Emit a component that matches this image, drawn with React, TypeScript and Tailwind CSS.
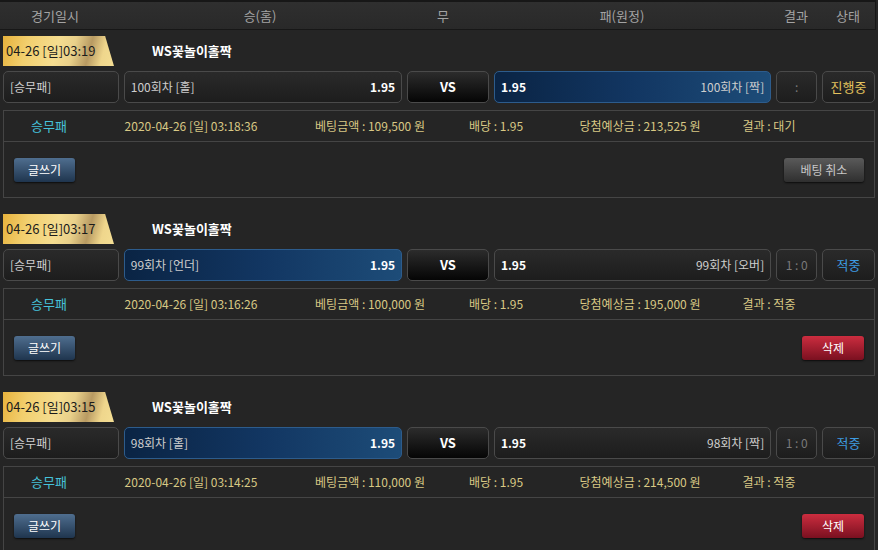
import React from "react";

type Sec = {
  tag: string;
  home: string;
  away: string;
  pick: "home" | "away";
  score: string;
  status: string;
  statusColor: string;
  date: string;
  amount: string;
  win: string;
  result: string;
  action: "cancel" | "delete";
};

const sections: Sec[] = [
  {
    tag: "04-26 [일]03:19",
    home: "100회차 [홀]",
    away: "100회차 [짝]",
    pick: "away",
    score: ":",
    status: "진행중",
    statusColor: "text-[#e3c35e]",
    date: "2020-04-26 [일] 03:18:36",
    amount: "109,500",
    win: "213,525",
    result: "대기",
    action: "cancel",
  },
  {
    tag: "04-26 [일]03:17",
    home: "99회차 [언더]",
    away: "99회차 [오버]",
    pick: "home",
    score: "1 : 0",
    status: "적중",
    statusColor: "text-[#3d9be0]",
    date: "2020-04-26 [일] 03:16:26",
    amount: "100,000",
    win: "195,000",
    result: "적중",
    action: "delete",
  },
  {
    tag: "04-26 [일]03:15",
    home: "98회차 [홀]",
    away: "98회차 [짝]",
    pick: "home",
    score: "1 : 0",
    status: "적중",
    statusColor: "text-[#3d9be0]",
    date: "2020-04-26 [일] 03:14:25",
    amount: "110,000",
    win: "214,500",
    result: "적중",
    action: "delete",
  },
];

const darkCell =
  "rounded-[5px] border border-[#4a4a4a] bg-[linear-gradient(#2a2a2a,#1d1d1d)]";
const blueCell =
  "rounded-[5px] border border-[#2d5c8c] bg-[linear-gradient(90deg,#0a2444,#123662_50%,#1d4c78)]";

function Section({ s }: { s: Sec }) {
  return (
    <div className="flex flex-col px-[3px] mb-[16px]">
      <div className="flex h-[30px] items-center">
        <div className="w-[111px] h-[30px] flex items-center pl-[3px] text-[13px] text-[#1b1b1b] [clip-path:polygon(0_0,92%_0,100%_100%,0_100%)] bg-[linear-gradient(105deg,#e7b23c_0%,#f2cf6e_22%,#f5dd90_48%,#e9d08a_62%,#b89a62_76%,#efd68c_88%,#f4de94_100%)]">
          {s.tag}
        </div>
        <div className="ml-[38px] text-[13px] font-bold text-white">WS꽃놀이홀짝</div>
      </div>
      <div className="mt-[5px] flex h-[32px] gap-[5px] text-[12px]">
        <div className={`${darkCell} w-[116px] flex items-center pl-[6px] text-[#cfcfcf]`}>[승무패]</div>
        <div
          className={`${s.pick === "home" ? blueCell : darkCell} w-[279px] flex items-center justify-between px-[6px]`}
        >
          <span className="text-[#cdcdcd]">{s.home}</span>
          <span className="font-bold text-white">1.95</span>
        </div>
        <div className="w-[82px] rounded-[5px] border border-[#4a4a4a] bg-[linear-gradient(#2c2c2c,#050505)] flex items-center justify-center font-bold text-white text-[13px]">
          VS
        </div>
        <div
          className={`${s.pick === "away" ? blueCell : darkCell} w-[278px] flex items-center justify-between px-[6px]`}
        >
          <span className="font-bold text-white">1.95</span>
          <span className="text-[#cdcdcd]">{s.away}</span>
        </div>
        <div className={`${darkCell} w-[41px] flex items-center justify-center text-[#7a7a7a]`}>{s.score}</div>
        <div className={`${darkCell} w-[53px] flex items-center justify-center text-[13px] ${s.statusColor}`}>
          {s.status}
        </div>
      </div>
      <div className="mt-[7px] h-[88px] w-[872px] border border-[#454545] flex flex-col">
        <div className="h-[31px] border-b border-[#454545] flex items-center text-[12px] text-[#d8c884]">
          <div className="w-[90px] text-center text-[#46c2da] text-[13px]">승무패</div>
          <div className="w-[194px] text-center">{s.date}</div>
          <div className="w-[164px] text-center">베팅금액 : {s.amount} 원</div>
          <div className="w-[88px] text-center">배당 : 1.95</div>
          <div className="w-[200px] text-center">당첨예상금 : {s.win} 원</div>
          <div className="w-[58px] text-center">결과 : {s.result}</div>
        </div>
        <div className="flex-1 flex items-center justify-between px-[10px]">
          <button className="w-[61px] h-[24px] rounded-[3px] bg-[linear-gradient(#4f6e8f,#1f354e)] text-white text-[12px] shadow-[0_1px_2px_rgba(0,0,0,0.7)]">
            글쓰기
          </button>
          {s.action === "cancel" ? (
            <button className="w-[80px] h-[24px] rounded-[3px] bg-[linear-gradient(#5a5a5a,#2f2f2f)] text-[#c8c8c8] text-[12px] shadow-[0_1px_2px_rgba(0,0,0,0.7)]">
              베팅 취소
            </button>
          ) : (
            <button className="w-[62px] h-[24px] rounded-[3px] bg-[linear-gradient(#cc2d3f,#7a1020)] text-white text-[12px] shadow-[0_1px_2px_rgba(0,0,0,0.7)]">
              삭제
            </button>
          )}
        </div>
      </div>
    </div>
  );
}

export default function App() {
  return (
    <div className="w-[878px] h-[550px] overflow-hidden bg-[#252525] font-['Noto_Sans_CJK_KR','Noto_Sans',sans-serif]">
      <div className="w-[876px] h-[30px] border-t-[2px] border-b border-r border-[#171717] bg-[linear-gradient(#2f2f2f,#292929)] flex items-center text-[13px] text-[#a3a3a3]">
        <div className="w-[110px] text-center">경기일시</div>
        <div className="w-[300px] text-center">승(홈)</div>
        <div className="w-[66px] text-center">무</div>
        <div className="w-[292px] text-center">패(원정)</div>
        <div className="w-[56px] text-center">결과</div>
        <div className="w-[48px] text-center">상태</div>
      </div>
      <div className="pt-[6px]">
        {sections.map((s, i) => (
          <Section key={i} s={s} />
        ))}
      </div>
    </div>
  );
}
